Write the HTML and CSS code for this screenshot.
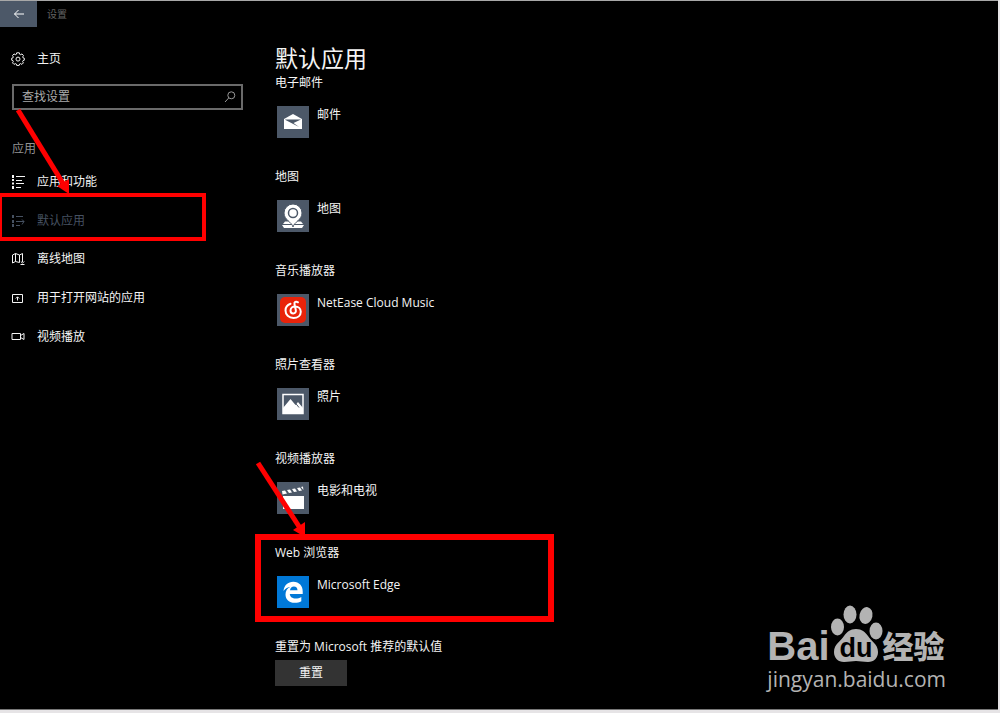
FILE: index.html
```
<!DOCTYPE html>
<html lang="zh-CN">
    <head>
        <meta charset="UTF-8">
        <meta name="viewport" content="width=device-width, initial-scale=1.0">
        <title>设置</title>
        <link rel="stylesheet" href="styles.css">
    </head>
    <body>
        <div class="window">
            <header class="titlebar">
                <button class="titlebar__back" aria-label="返回">
                    <svg width="12" height="10" viewBox="0 0 12 10"><path d="M11 5H1.500M5.500 1L1.500 5l4 4"/></svg>
                </button>
                <span class="titlebar__name">设置</span>
            </header>

            <div class="content">
                <aside class="sidebar">
                    <a href="#" class="sidebar__link sidebar__home">
                        <svg class="icon" width="14" height="14" viewBox="0 0 14 14"><path d="M5.700 .8h2.600l.4 1.500 1 .4L11 1.900l1.500 1.700-.8 1.300.4 1 1.200.3v2l-1.300.4-.4 1 .8 1.300-1.500 1.500-1.300-.8-1 .4-.4 1.400H5.700l-.4-1.400-1-.4-1.300.8-1.500-1.500.8-1.300-.4-1L.7 8.200v-2l1.200-.3.4-1-.8-1.300L3 1.900l1.300.8 1-.4z"/><circle cx="7" cy="7.100" r="2"/></svg>
                        <span>主页</span>
                    </a>

                    <form class="search">
                        <input type="text" class="search__input" aria-label="查找设置" placeholder="查找设置">
                        <svg class="search__icon" width="12" height="12" viewBox="0 0 12 12"><circle cx="7.300" cy="4.300" r="3.500"/><path d="M4.800 6.900L1 11"/></svg>
                    </form>

                    <h2 class="sidebar__title">应用</h2>
                    <nav class="nav">
                        <a href="#" class="sidebar__link">
                            <svg class="icon" width="14" height="14" viewBox="0 0 14 14"><path d="M5 1.500h9M5 5.500h6M5 8.500h8M5 12.500h5"/><path class="icon__dots" d="M1 0h2v3H1zM1 4h2v2H1zM1 7.500h2v2H1zM1 11h2v3H1z"/></svg>
                            <span>应用和功能</span>
                        </a>
                        <a href="#" class="sidebar__link sidebar__link--active">
                            <svg class="icon" width="14" height="14" viewBox="0 0 14 14"><path d="M5 2.500h7M5 7.500h8M5 11.500h4M11 5.500l2 2-2 3"/><path class="icon__dots" d="M1 1h2v3H1zM1 6h2v3H1zM1 10h2v3H1z"/></svg>
                            <span>默认应用</span>
                        </a>
                        <a href="#" class="sidebar__link">
                            <svg class="icon" width="14" height="14" viewBox="0 0 14 14"><path d="M8.500 10.500L4.500 9.500 1.500 11V3l3-1.500 4 1.500 3-1.500V10M4.500 1.500v8M8.500 3v7.500M9.800 9.500l1.700 1.700 1.700-1.700M9.500 12.500h4"/></svg>
                            <span>离线地图</span>
                        </a>
                        <a href="#" class="sidebar__link">
                            <svg class="icon" width="14" height="14" viewBox="0 0 14 14"><path d="M1.500 3.500h10v8h-10zM6.500 9.500V6M4.800 7.500l1.700-1.700 1.700 1.700"/></svg>
                            <span>用于打开网站的应用</span>
                        </a>
                        <a href="#" class="sidebar__link">
                            <svg class="icon" width="14" height="14" viewBox="0 0 14 14"><path d="M1 3.500h8.500v6H1zM9.500 5.500l3.500-2v6l-3.500-2"/></svg>
                            <span>视频播放</span>
                        </a>
                    </nav>
                </aside>

                <main class="main">
                    <h1 class="main__title">默认应用</h1>

                    <section class="setting">
                        <h3 class="setting__title">电子邮件</h3>
                        <button class="app">
                            <svg class="app__icon" viewBox="0 0 32 32"><path d="M7 13l9-5 9 5v10H7z" fill="#fff"/><path d="M8 13.500h16L16.500 17l5.500 4L8.500 14z" fill="#4c5868"/></svg>
                            <span>邮件</span>
                        </button>
                    </section>

                    <section class="setting">
                        <h3 class="setting__title">地图</h3>
                        <button class="app">
                            <svg class="app__icon" viewBox="0 0 32 32"><path d="M8 21.500h16l2 2.500H6zM5 25h22l-2 3H7z" fill="#fff"/><path d="M16 27c-1-5-9-7-9-14a9 9 0 0 1 18 0c0 7-8 9-9 14z" fill="#fff" stroke="#4c5868"/><circle cx="16" cy="13" r="4.500" fill="#fff" stroke="#4c5868" stroke-width="1.500"/></svg>
                            <span>地图</span>
                        </button>
                    </section>

                    <section class="setting">
                        <h3 class="setting__title">音乐播放器</h3>
                        <button class="app">
                            <svg class="app__icon" viewBox="0 0 32 32"><rect x="3" y="3" width="26" height="26" rx="5" fill="#e9230a"/><path d="M21 8.300c-2-1.300-4-.2-3.500 2l1.300 5.700c.5 2.500-1 3.500-2.500 3.500-1.700 0-2.800-1.300-2.800-3 0-2.500 2.200-4 4.500-4 3.500 0 5.800 2.300 5.800 5.300 0 3.600-3 6.200-7.300 6.200-4.800 0-8-3.400-8-7.500 0-3.300 2-5.800 5-6.800" fill="none" stroke="#fff" stroke-width="2" stroke-linecap="round"/></svg>
                            <span>NetEase Cloud Music</span>
                        </button>
                    </section>

                    <section class="setting">
                        <h3 class="setting__title">照片查看器</h3>
                        <button class="app">
                            <svg class="app__icon" viewBox="0 0 32 32"><path d="M6 6.500h20v19H6z" fill="none" stroke="#fff" stroke-width="1.500"/><path d="M6 20l7.500-9 5 6 2.500-3 5 6v6H6z" fill="#fff"/><path d="M18 14.500l4 5" stroke="#4c5868"/></svg>
                            <span>照片</span>
                        </button>
                    </section>

                    <section class="setting">
                        <h3 class="setting__title">视频播放器</h3>
                        <button class="app">
                            <svg class="app__icon" viewBox="0 0 32 32"><path d="M6 14h21v13H6z" fill="#fff"/><path d="M5 9l3-.5 2 3-4.500 1zM10 8l3-.5 2 3-3 .6zM15 7l3-.5 2 3-3 .6zM20 6l3-.5 2 3-3 .6zM24 5l2-.4.400 3.500z" fill="#fff"/></svg>
                            <span>电影和电视</span>
                        </button>
                    </section>

                    <section class="setting">
                        <h3 class="setting__title">Web 浏览器</h3>
                        <button class="app">
                            <svg class="app__icon app__icon--edge" viewBox="0 0 32 32"><path d="M6.500 15C7 9.500 11 5.800 16.300 5.800c6 0 9.400 4.300 9.400 9.400V18H12.800c.2 3 2.700 4.500 5.800 4.500 2 0 4-.6 5.700-1.600v4.300c-1.800 1-4 1.500-6.600 1.500-5.500 0-9.200-3.200-9.200-8.300 0-3.500 1.800-6.300 5-7.700-2.600.3-5 1.800-7 4.300zM13 14.300h7.500c0-2.300-1.300-3.700-3.600-3.700-2.100 0-3.600 1.400-3.900 3.700z" fill="#fff" fill-rule="evenodd"/></svg>
                            <span>Microsoft Edge</span>
                        </button>
                    </section>

                    <h3 class="setting__title">重置为 Microsoft 推荐的默认值</h3>
                    <button class="reset">重置</button>
                </main>
            </div>

            <!-- red boxes and arrows over the settings -->
            <div class="callout callout--menu"></div>
            <div class="callout callout--browser"></div>
            <svg class="arrow arrow--menu" width="60" height="90" viewBox="0 0 60 90"><path d="M3 2L49 77" stroke="#f00" stroke-width="5"/><path d="M54 86L42 78l12-7z" fill="#f00"/></svg>
            <svg class="arrow arrow--browser" width="60" height="80" viewBox="0 0 60 80"><path d="M3 3L45 68" stroke="#f00" stroke-width="5"/><path d="M50 77L38 70l12-8z" fill="#f00"/></svg>

            <div class="watermark">
                <div class="watermark__logo">
                    <span class="watermark__bai">Bai</span>
                    <svg class="watermark__paw" width="53" height="58" viewBox="0 0 53 58">
                        <g fill="#b3b3b3">
                            <ellipse cx="7.500" cy="22" rx="6.500" ry="8.500"/>
                            <ellipse cx="20" cy="9.500" rx="6.500" ry="9"/>
                            <ellipse cx="36" cy="10.500" rx="6.500" ry="8.500" transform="rotate(12 36 10.500)"/>
                            <ellipse cx="46" cy="26" rx="6.500" ry="8.500"/>
                            <path d="M26 24c6 0 9 3 12 7 3 5 10 8 10 16 0 6-4 10-10 10-5 0-8-1-12-1s-7 1-12 1C8 57 4 53 4 47c0-8 7-11 10-16 3-4 6-7 12-7z"/>
                        </g>
                        <text class="watermark__du" x="26" y="52" text-anchor="middle">du</text>
                    </svg>
                    <span class="watermark__jingyan">经验</span>
                </div>
                <div class="watermark__url">jingyan.baidu.com</div>
            </div>
        </div>
    </body>
</html>
```
FILE: styles.css
```
*, *:before, *:after {
    box-sizing: border-box;
}

body {
    margin: 0;
    background: #e6e4e6;
    color: #f4f4f4;
    font-family: 'Open Sans', 'Noto Sans CJK SC', sans-serif;
    font-size: 12px;
    line-height: 18px;
}

h1, h2, h3 {
    margin: 0;
    font-weight: 400;
}

button {
    border: 0;
    padding: 0;
    color: inherit;
    font: inherit;
    cursor: pointer;
}

svg {
    display: block;
    flex: none;
}

.window {
    position: relative;
    min-height: calc(100vh - 3px);
    margin-right: 2px;
    border-top: 1px solid #a8a8a8;
    border-bottom: 1px solid #777;
    background: #000;
    overflow: hidden;
}

.titlebar {
    display: flex;
    align-items: center;
    gap: 10px;
    height: 26px;
}

.titlebar__back {
    display: flex;
    align-items: center;
    justify-content: center;
    width: 37px;
    height: 26px;
    background: #4c5868;
}

.titlebar__back svg {
    fill: none;
    stroke: #fff;
}

.titlebar__name {
    color: #626262;
    font-size: 10px;
}

.content {
    display: flex;
}

.sidebar {
    width: 275px;
    padding-top: 13px;
}

.sidebar__link {
    display: flex;
    align-items: center;
    gap: 12px;
    height: 38px;
    padding-left: 11px;
    color: inherit;
    text-decoration: none;
}

.nav {
    display: grid;
    grid-template-rows: repeat(5, 1fr);
    height: 193px;
    align-items: center;
}

.sidebar__link--active {
    color: #465161;
    border-left: 2px solid #29313b;
    height: 20px;
    padding-left: 9px;
}

.icon {
    fill: none;
    stroke: currentColor;
}

.icon__dots {
    fill: currentColor;
    stroke: none;
}

.search {
    display: flex;
    align-items: center;
    height: 26px;
    margin: 6px 32px 0 12px;
    padding-right: 5px;
    border: 2px solid #6a6a6a;
}

.search__input {
    flex: 1;
    min-width: 0;
    border: 0;
    padding: 0 8px;
    background: none;
    color: #ececec;
    font: inherit;
}

.search__input::placeholder {
    color: #aaa;
    opacity: 1;
}

.search__icon {
    fill: none;
    stroke: #999;
}

.sidebar__title {
    margin: 30px 0 5px 12px;
    color: #929292;
    font-size: 12px;
}

.main {
    flex: 1;
    padding-top: 16px;
}

.main__title {
    font-size: 23px;
    line-height: 30px;
}

.setting {
    padding-bottom: 29px;
}

.setting__title {
    font-size: 12px;
    line-height: 20px;
}

.app {
    display: flex;
    gap: 8px;
    margin: 13px 0 0 2px;
    background: none;
    text-align: left;
}

.app__icon {
    width: 32px;
    height: 32px;
    background: #4c5868;
}

.app__icon--edge {
    background: #0078d7;
}

.reset {
    display: block;
    width: 72px;
    height: 26px;
    margin-top: 3px;
    background: #333;
}

.callout {
    position: absolute;
    border: 6px solid #f00;
}

.callout--menu {
    top: 192px;
    left: -2px;
    width: 208px;
    height: 48px;
    border-width: 4px;
}

.callout--browser {
    top: 533px;
    left: 255px;
    width: 299px;
    height: 88px;
}

.arrow {
    position: absolute;
}

.arrow--menu {
    top: 107px;
    left: 15px;
}

.arrow--browser {
    top: 459px;
    left: 255px;
}

.watermark {
    position: absolute;
    right: 52px;
    bottom: 16px;
    color: #b3b3b3;
}

.watermark__logo {
    display: flex;
    align-items: flex-end;
}

.watermark__bai {
    font: bold 40px/38px 'Liberation Sans', Arial, sans-serif;
}

.watermark__paw {
    margin-bottom: 2px;
}

.watermark__du {
    fill: #000;
    font: bold 27px 'Liberation Sans', Arial, sans-serif;
}

.watermark__jingyan {
    font-size: 31px;
    font-weight: 900;
    line-height: 38px;
}

.watermark__url {
    font-size: 21px;
    line-height: 28px;
}
```
